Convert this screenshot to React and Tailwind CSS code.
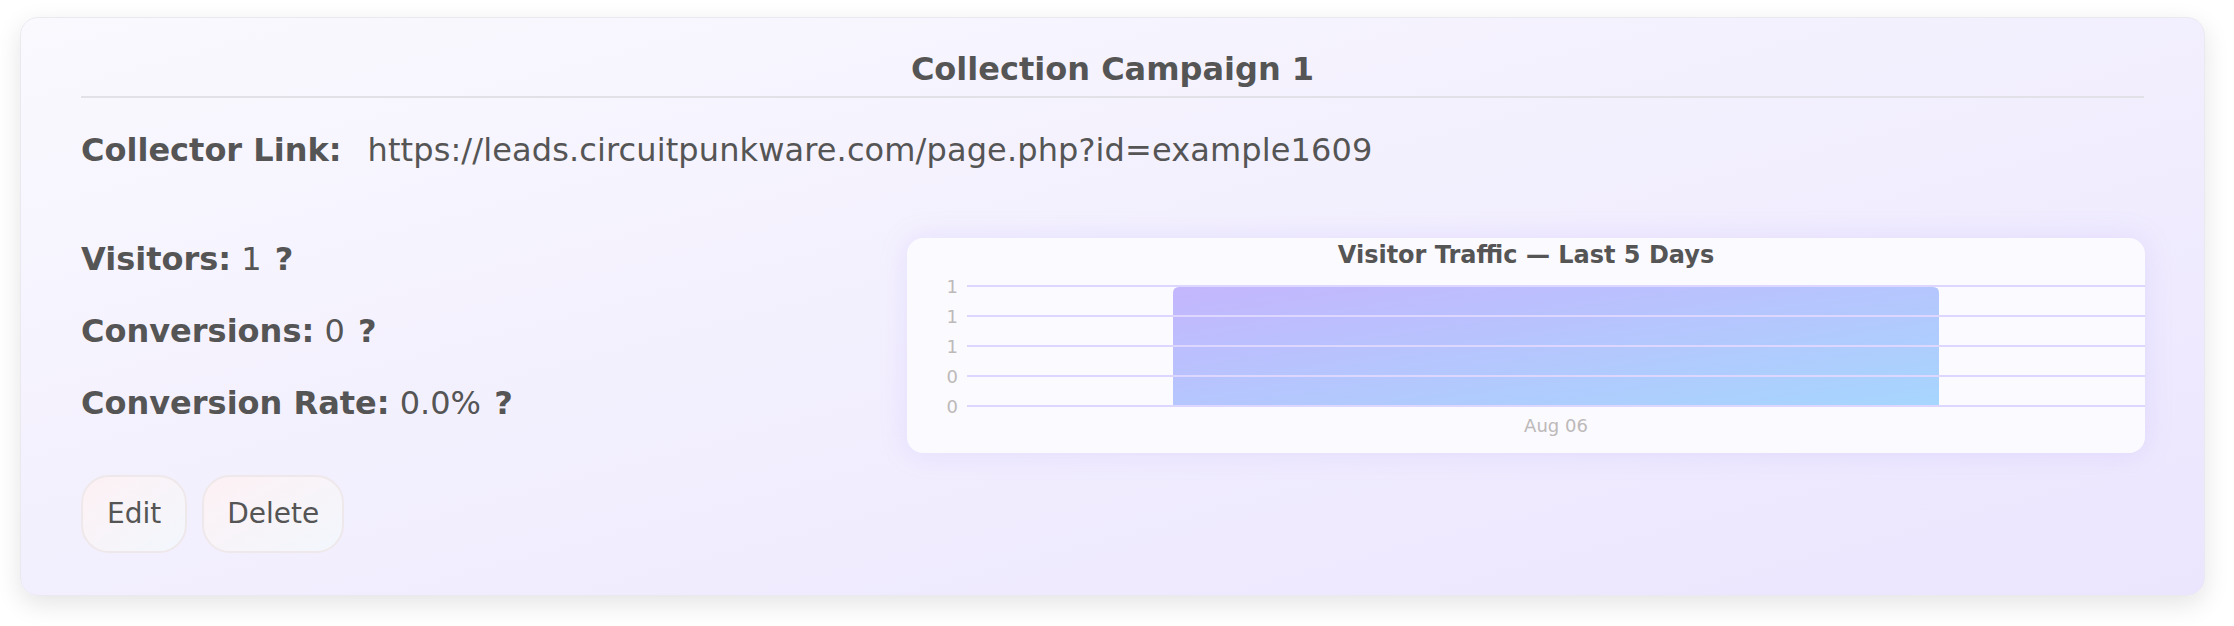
import React from "react";

const stats = [
  { label: "Visitors:", value: "1" },
  { label: "Conversions:", value: "0" },
  { label: "Conversion Rate:", value: "0.0%" },
];

const yTicks = ["1", "1", "1", "0", "0"];

function TrafficChart() {
  return (
    <div className="flex-1 bg-[#fbfaff] rounded-[16px] shadow-[0_0_28px_rgba(167,139,250,0.18)] pt-[3px] h-[215px]">
      <h3 className="text-center text-[24px] leading-[28px] font-bold text-[#555]">
        Visitor Traffic — Last 5 Days
      </h3>
      <svg width="1238" height="179" viewBox="0 0 1238 179" className="block">
        <defs>
          <linearGradient id="barFill" x1="0" y1="0" x2="1" y2="1">
            <stop offset="0" stopColor="#c4b6fd" />
            <stop offset="1" stopColor="#a6d6fe" />
          </linearGradient>
        </defs>
        <path d="M266 137 V24 Q266 18 272 18 H1026 Q1032 18 1032 24 V137 Z" fill="url(#barFill)" />
        {yTicks.map((t, i) => (
          <g key={i}>
            <line x1="60" x2="1238" y1={17 + i * 30} y2={17 + i * 30} stroke="#ddd6fe" strokeWidth="2" />
            <text
              x="51"
              y={24 + i * 30}
              textAnchor="end"
              fontSize="18"
              fill="#bdb9b9"
              fontFamily="'DejaVu Sans', sans-serif"
            >
              {t}
            </text>
          </g>
        ))}
        <text x="649" y="163" textAnchor="middle" fontSize="18" fill="#bdb9b9" fontFamily="'DejaVu Sans', sans-serif">
          Aug 06
        </text>
      </svg>
    </div>
  );
}

export default function App() {
  return (
    <div className="min-h-screen bg-white px-[20px] pt-[17px] font-['DejaVu_Sans',sans-serif] text-[#555]">
      <div className="w-[2185px] rounded-[18px] border border-[#ebe9f0] bg-linear-to-br from-[#faf9fe] to-[#ebe5fe] shadow-[0_8px_26px_rgba(0,0,0,0.11)] px-[60px] pt-[33px] pb-[42px]">
        <h2 className="text-center text-[32px] leading-[37px] font-bold pb-[8px] border-b-2 border-[#e3e1e8]">
          Collection Campaign 1
        </h2>
        <div className="mt-[34px] text-[32px] leading-[37px] flex">
          <span className="font-bold">Collector Link:</span>
          <span className="ml-[26px] tracking-[0.12px]">https://leads.circuitpunkware.com/page.php?id=example1609</span>
        </div>
        <div className="mt-[69px] flex items-start">
          <div className="w-[826px] shrink-0 pt-[3px]">
            <div className="flex flex-col gap-[35px]">
              {stats.map((s) => (
                <p key={s.label} className="text-[32px] leading-[37px]">
                  <span className="font-bold">{s.label}</span> {s.value}{" "}
                  <span className="font-bold cursor-help ml-[3px]">?</span>
                </p>
              ))}
            </div>
            <div className="mt-[53px] flex gap-[15px]">
              <button className="h-[78px] px-[24px] rounded-[28px] border-2 border-[#efe8ea] bg-linear-to-br from-[#fdf1f4] to-[#f2f7fd] text-[28px] text-[#555]">
                Edit
              </button>
              <button className="h-[78px] px-[23px] rounded-[28px] border-2 border-[#efe8ea] bg-linear-to-br from-[#fdf1f4] to-[#f2f7fd] text-[28px] text-[#555]">
                Delete
              </button>
            </div>
          </div>
          <TrafficChart />
        </div>
      </div>
    </div>
  );
}
